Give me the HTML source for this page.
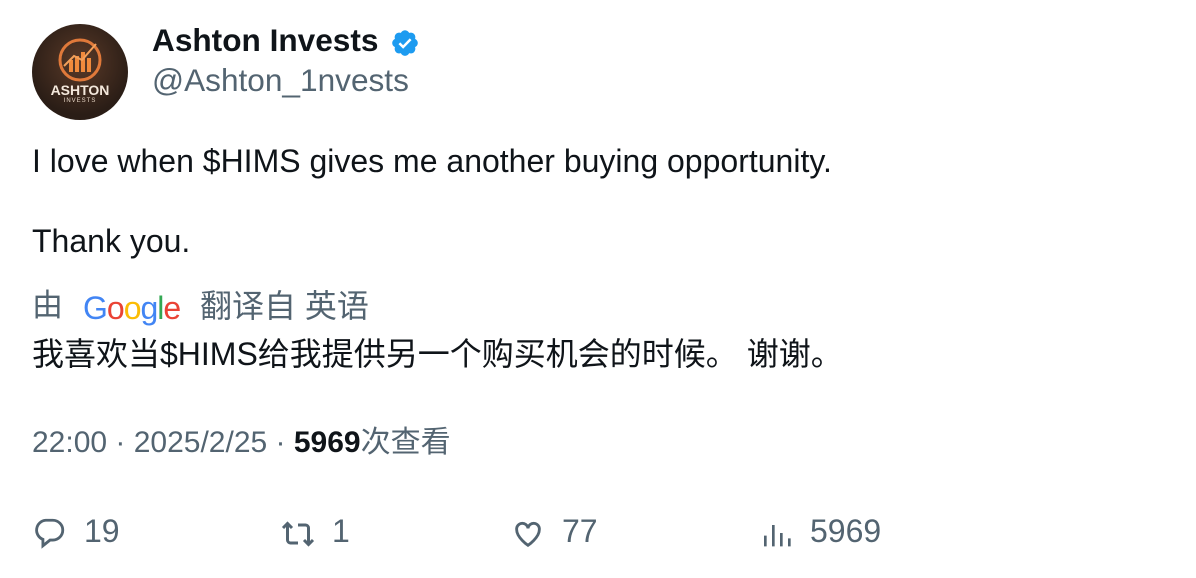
<!DOCTYPE html>
<html><head><meta charset="utf-8"><style>
body{margin:0;background:#fff;width:1196px;height:578px;overflow:hidden;font-family:"Liberation Sans","Noto Sans CJK SC",sans-serif;color:#0f1419;position:relative}
.a{position:absolute;white-space:nowrap}
.g{color:#536471}
svg{position:absolute}
</style></head><body>
<div class="a" style="left:32px;top:24px;width:96px;height:96px;border-radius:50%;background:radial-gradient(circle at 50% 40%,#5a3a28,#2a1d16 70%);overflow:hidden">
<svg style="left:24px;top:12px" width="48" height="48" viewBox="0 0 48 48"><circle cx="24" cy="24" r="20" fill="none" stroke="#e0793a" stroke-width="3"/><g fill="#f08a3c"><rect x="13" y="24" width="4" height="12"/><rect x="19" y="20" width="4" height="16"/><rect x="25" y="16" width="4" height="20"/><rect x="31" y="22" width="4" height="14"/></g><path d="M8 30 L18 20 L26 24 L40 8" stroke="#f3a05a" stroke-width="2" fill="none"/></svg>
<div class="a" style="left:0;width:96px;top:58px;text-align:center;color:#f4e8dc;font-weight:bold;font-size:14px">ASHTON</div>
<div class="a" style="left:0;width:96px;top:74px;text-align:center;color:#e8d8c8;font-size:6px;letter-spacing:1px">INVESTS</div>
</div>
<div class="a" style="left:152px;top:22px;font-size:31.6px;font-weight:bold">Ashton Invests</div>
<svg style="left:390px;top:28px" width="30" height="30" viewBox="0 0 24 24"><path fill="#1d9bf0" d="M22.25 12c0-1.43-.88-2.67-2.19-3.34.46-1.39.2-2.9-.81-3.91s-2.52-1.27-3.91-.81c-.66-1.310-1.91-2.19-3.34-2.19s-2.67.88-3.33 2.19c-1.4-.46-2.91-.2-3.92.81s-1.26 2.52-.8 3.91c-1.31.67-2.2 1.91-2.2 3.34s.89 2.670 2.2 3.34c-.46 1.39-.21 2.9.8 3.91s2.52 1.26 3.91.81c.67 1.31 1.91 2.19 3.34 2.19s2.68-.88 3.34-2.19c1.39.45 2.9.2 3.91-.81s1.27-2.52.81-3.91c1.31-.67 2.19-1.91 2.19-3.34z"/><path d="M7.5 12.2l3 3 6-6.2" stroke="#fff" stroke-width="2" fill="none"/></svg>
<div class="a g" style="left:152px;top:62px;font-size:31.6px">@Ashton_1nvests</div>
<div class="a" style="left:32px;top:143px;font-size:32px">I love when $HIMS gives me another buying opportunity.</div>
<div class="a" style="left:32px;top:223px;font-size:32px">Thank you.</div>
<div class="a g" style="left:32px;top:285px;font-size:31px;line-height:42px">由</div>
<div class="a" style="left:83px;top:290px;font-size:32px;letter-spacing:-1px"><span style="color:#4285f4">G</span><span style="color:#ea4335">o</span><span style="color:#fbbc05">o</span><span style="color:#4285f4">g</span><span style="color:#34a853">l</span><span style="color:#ea4335">e</span></div>
<div class="a g" style="left:200px;top:285px;font-size:32px;line-height:42px">翻译自 英语</div>
<div class="a" style="left:32px;top:333px;font-size:32px;line-height:42px">我喜欢当$HIMS给我提供另一个购买机会的时候。 谢谢。</div>
<div class="a g" style="left:32px;top:423px;font-size:30px;line-height:40px">22:00 · 2025/2/25 · <b style="color:#0f1419">5969</b>次查看</div>
<svg style="left:33px;top:516px" width="34" height="34" viewBox="0 0 24 24" fill="none" stroke="#536471" stroke-width="2"><path d="M9 3h5a7 7 0 0 1 0 14h-2l-5 4v-4.5A7 7 0 0 1 9 3z"/></svg>
<div class="a g" style="left:84px;top:513px;font-size:32px">19</div>
<svg style="left:280px;top:516px" width="36" height="36" viewBox="0 0 24 24" fill="none" stroke="#536471" stroke-width="2"><path d="M2 8l3-3 3 3M5 5v11a2 2 0 0 0 2 2h5M22 16l-3 3-3-3M19 19V8a2 2 0 0 0-2-2h-5"/></svg>
<div class="a g" style="left:332px;top:513px;font-size:32px">1</div>
<svg style="left:511px;top:517px" width="34" height="34" viewBox="0 0 24 24" fill="none" stroke="#536471" stroke-width="2"><path d="M12 20s-8-5.5-8-11a4 4 0 0 1 8-1 4 4 0 0 1 8 1c0 5.5-8 11-8 11z"/></svg>
<div class="a g" style="left:562px;top:513px;font-size:32px">77</div>
<svg style="left:760px;top:517px" width="32" height="32" viewBox="0 0 24 24" stroke="#536471" stroke-width="2"><path d="M4 22v-8M10 22V6M16 22v-10M22 22v-6"/></svg>
<div class="a g" style="left:810px;top:513px;font-size:32px">5969</div>
</body></html>
